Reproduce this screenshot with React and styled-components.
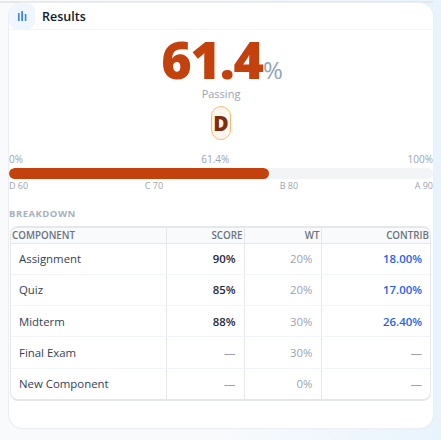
import styled, { createGlobalStyle } from "styled-components"

const rows = [
  { name: "Assignment", score: "90%", wt: "20%", contrib: "18.00%" },
  { name: "Quiz", score: "85%", wt: "20%", contrib: "17.00%" },
  { name: "Midterm", score: "88%", wt: "30%", contrib: "26.40%" },
  { name: "Final Exam", score: "—", wt: "30%", contrib: "—" },
  { name: "New Component", score: "—", wt: "0%", contrib: "—" },
]

export default function App() {
  return (
    <Page>
      <GlobalStyle />
      <TopEdge />
      <Card>
        <Header>
          <IconBox>
            <svg width="12" height="12" viewBox="0 0 12 12" fill="#3b82f6">
              <rect x="2" y="3" width="1.6" height="8" rx="0.5" />
              <rect x="5.2" y="1" width="1.8" height="10" rx="0.5" />
              <rect x="8.8" y="4" width="1.6" height="7" rx="0.5" />
            </svg>
          </IconBox>
          <Title>Results</Title>
        </Header>
        <Body>
          <ScoreLine>
            <Score>61.4</Score>
            <Percent>%</Percent>
          </ScoreLine>
          <Passing>Passing</Passing>
          <GradeBadge>D</GradeBadge>
          <BarLabels>
            <span>0%</span>
            <span>61.4%</span>
            <span>100%</span>
          </BarLabels>
          <Track>
            <Fill style={{ width: "61.4%" }} />
          </Track>
          <Marks>
            <span>D 60</span>
            <span>C 70</span>
            <span>B 80</span>
            <span>A 90</span>
          </Marks>
          <SectionLabel>BREAKDOWN</SectionLabel>
          <TableWrap>
            <Table>
              <thead>
                <tr>
                  <Th>COMPONENT</Th>
                  <Th $right>SCORE</Th>
                  <Th $right>WT</Th>
                  <Th $right>CONTRIB</Th>
                </tr>
              </thead>
              <tbody>
                {rows.map((r) => (
                  <tr key={r.name}>
                    <NameCell>{r.name}</NameCell>
                    <ScoreCell $empty={r.score === "—"}>{r.score}</ScoreCell>
                    <WtCell>{r.wt}</WtCell>
                    <ContribCell $empty={r.contrib === "—"}>{r.contrib}</ContribCell>
                  </tr>
                ))}
              </tbody>
            </Table>
          </TableWrap>
        </Body>
      </Card>
    </Page>
  )
}

const GlobalStyle = createGlobalStyle`
  html, body {
    margin: 0;
    padding: 0;
    overflow: hidden;
  }
  body {
    font-family: "Open Sans", "Noto Sans", sans-serif;
  }
`
const Page = styled.div`
  width: 441px;
  height: 440px;
  box-sizing: border-box;
  padding: 0 8px 0 9px;
  background: linear-gradient(90deg, #f8fafc 0%, #f8fafc 50%, #e8f4fd 100%);
  overflow: hidden;
`
const TopEdge = styled.div`
  height: 2px;
  margin: 1px -8px 0 -9px;
  width: 433px;
  background: #e5e7eb;
`
const Card = styled.div`
  height: 425px;
  box-sizing: border-box;
  background: #fff;
  border-radius: 14px;
  box-shadow: 0 0 0 1px #eceef2, 0 1px 2px rgba(0, 0, 0, 0.05);
  overflow: hidden;
`
const Header = styled.div`
  height: 26px;
  display: flex;
  align-items: center;
  gap: 7px;
  border-bottom: 1px solid #f1f5f9;
`
const IconBox = styled.div`
  width: 26px;
  height: 26px;
  display: flex;
  align-items: center;
  justify-content: center;
  background: #eff6ff;
  border-radius: 8px;
`
const Title = styled.div`
  font-size: 12.5px;
  font-weight: 600;
  color: #0f172a;
`
const Body = styled.div`
  display: flex;
  flex-direction: column;
  align-items: center;
`
const ScoreLine = styled.div`
  display: flex;
  align-items: baseline;
  justify-content: center;
  height: 53px;
  padding-top: 3px;
  margin-left: 2px;
`
const Score = styled.span`
  font-size: 52px;
  font-weight: 800;
  line-height: 52px;
  color: #c2410c;
  letter-spacing: -1.2px;
`
const Percent = styled.span`
  font-size: 24px;
  line-height: 24px;
  color: #94a3b8;
`
const Passing = styled.div`
  font-size: 11px;
  line-height: 16px;
  color: #9ca3af;
`
const GradeBadge = styled.div`
  margin-top: 4px;
  width: 18px;
  height: 32px;
  display: flex;
  align-items: center;
  justify-content: center;
  border: 1px solid #fdba74;
  border-radius: 10px;
  background: #fff7ed;
  color: #7c2d12;
  font-size: 21px;
  font-weight: 800;
`
const BarLabels = styled.div`
  align-self: stretch;
  margin-top: 12px;
  display: flex;
  justify-content: space-between;
  font-size: 10px;
  line-height: 14px;
  color: #9ca3af;
`
const Track = styled.div`
  align-self: stretch;
  height: 11px;
  margin-top: 2px;
  background: #f3f4f6;
  border-radius: 6px;
  overflow: hidden;
`
const Fill = styled.div`
  height: 100%;
  background: #c2410c;
  border-radius: 6px;
`
const Marks = styled.div`
  align-self: stretch;
  display: flex;
  justify-content: space-between;
  font-size: 9px;
  line-height: 14px;
  color: #9ca3af;
`
const SectionLabel = styled.div`
  align-self: stretch;
  margin-top: 14px;
  font-size: 9.5px;
  font-weight: 700;
  line-height: 14px;
  letter-spacing: 0.5px;
  color: #a8b0bd;
`
const TableWrap = styled.div`
  align-self: stretch;
  margin: 5px 2px 0 1px;
  border: 1px solid #e5e7eb;
  border-top-width: 2px;
  border-bottom-width: 2px;
  border-radius: 8px;
  overflow: hidden;
`
const Table = styled.table`
  width: 100%;
  border-collapse: collapse;
  table-layout: fixed;
  font-size: 11.4px;
`
const Th = styled.th`
  box-sizing: border-box;
  height: 15px;
  padding: 0 1px;
  font-size: 9.8px;
  font-weight: 600;
  color: #6b7280;
  background: #f8fafc;
  text-align: ${(p) => (p.$right ? "right" : "left")};
  border-bottom: 1px solid #e5e7eb;
  border-right: 1px solid #e5e7eb;
  &:first-child { width: 155px; }
  &:nth-child(2) { width: 78px; }
  &:nth-child(3) { width: 77px; }
  &:last-child { border-right: 0; }
`
const Td = styled.td`
  height: 30.25px;
  padding: 0 8px;
  border-bottom: 1px solid #f1f5f9;
  border-right: 1px solid #e5e7eb;
  tr:last-child & { border-bottom: 0; }
  &:last-child { border-right: 0; }
`
const NameCell = styled(Td)`
  color: #334155;
`
const ScoreCell = styled(Td)`
  text-align: right;
  font-weight: ${(p) => (p.$empty ? 400 : 600)};
  color: ${(p) => (p.$empty ? "#9ca3af" : "#1e293b")};
`
const WtCell = styled(Td)`
  text-align: right;
  color: #9ca3af;
`
const ContribCell = styled(Td)`
  text-align: right;
  font-weight: ${(p) => (p.$empty ? 400 : 600)};
  color: ${(p) => (p.$empty ? "#9ca3af" : "#2563eb")};
`
